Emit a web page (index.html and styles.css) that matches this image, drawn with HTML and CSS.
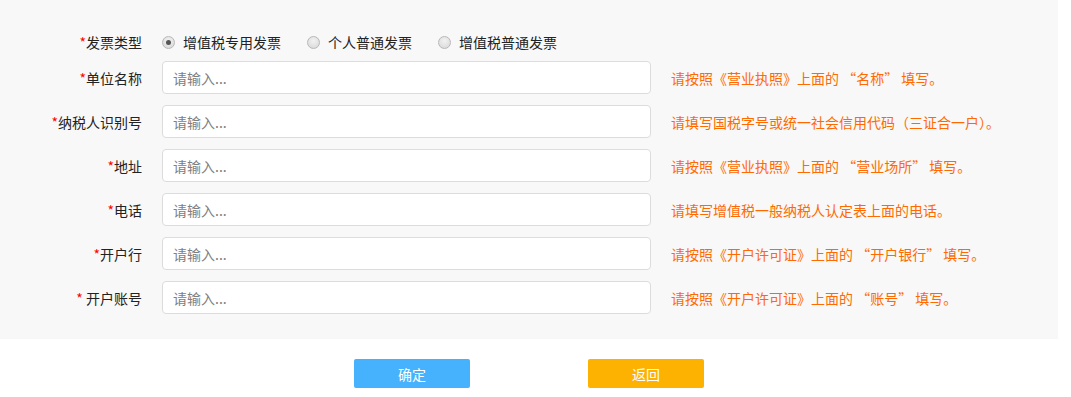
FILE: index.html
```html
<!DOCTYPE html>
<html lang="zh-CN">
<head>
<meta charset="utf-8">
<title>发票信息</title>
<link rel="stylesheet" href="styles.css">
</head>
<body>
<div class="panel">
  <div class="row row-radio">
    <div class="label"><span class="req">*</span>发票类型</div>
    <div class="radios">
      <label class="radio"><span class="dot checked"></span>增值税专用发票</label>
      <label class="radio"><span class="dot"></span>个人普通发票</label>
      <label class="radio"><span class="dot"></span>增值税普通发票</label>
    </div>
  </div>
  <div class="row">
    <div class="label"><span class="req">*</span>单位名称</div>
    <input class="field" type="text" placeholder="请输入...">
    <div class="hint">请按照《营业执照》上面的 “名称” 填写。</div>
  </div>
  <div class="row">
    <div class="label"><span class="req">*</span>纳税人识别号</div>
    <input class="field" type="text" placeholder="请输入...">
    <div class="hint">请填写国税字号或统一社会信用代码（三证合一户）。</div>
  </div>
  <div class="row">
    <div class="label"><span class="req">*</span>地址</div>
    <input class="field" type="text" placeholder="请输入...">
    <div class="hint">请按照《营业执照》上面的 “营业场所” 填写。</div>
  </div>
  <div class="row">
    <div class="label"><span class="req">*</span>电话</div>
    <input class="field" type="text" placeholder="请输入...">
    <div class="hint">请填写增值税一般纳税人认定表上面的电话。</div>
  </div>
  <div class="row">
    <div class="label"><span class="req">*</span>开户行</div>
    <input class="field" type="text" placeholder="请输入...">
    <div class="hint">请按照《开户许可证》上面的 “开户银行” 填写。</div>
  </div>
  <div class="row">
    <div class="label"><span class="req">*</span>&nbsp;开户账号</div>
    <input class="field" type="text" placeholder="请输入...">
    <div class="hint">请按照《开户许可证》上面的 “账号” 填写。</div>
  </div>
</div>
<div class="actions">
  <button class="btn btn-ok" type="button">确定</button>
  <button class="btn btn-back" type="button">返回</button>
</div>
</body>
</html>
```
FILE: styles.css
```css
html, body {
  margin: 0;
  padding: 0;
  background: #ffffff;
}
body {
  font-family: "Microsoft YaHei", "Noto Sans CJK SC", "Noto Sans", sans-serif;
  font-size: 14px;
  color: #222;
}
.panel {
  width: 1058px;
  background: #f8f8f8;
  padding: 31px 0 25px;
  box-sizing: border-box;
  display: flex;
  flex-direction: column;
  gap: 11px;
}
.row {
  display: flex;
  align-items: center;
  height: 33px;
}
.row-radio {
  height: 22px;
  margin-bottom: -3px;
}
.label {
  width: 142px;
  text-align: right;
  margin-right: 20px;
  white-space: nowrap;
  line-height: 20px;
}
.req {
  color: #ff0000;
}
.radios {
  display: flex;
  align-items: center;
}
.radio {
  display: flex;
  align-items: center;
  margin-right: 26px;
  line-height: 20px;
}
.dot {
  width: 11px;
  height: 11px;
  border-radius: 50%;
  border: 1px solid #b8b8b8;
  background: radial-gradient(circle at 50% 35%, #f2f2f2 0%, #d6d6d6 100%);
  margin-right: 8px;
  position: relative;
}
.dot.checked::after {
  content: "";
  position: absolute;
  left: 3px;
  top: 3px;
  width: 5px;
  height: 5px;
  border-radius: 50%;
  background: #555;
}
.field {
  width: 489px;
  height: 33px;
  box-sizing: border-box;
  border: 1px solid #dcdcdc;
  border-radius: 4px;
  background: #fff;
  padding: 0 10px;
  font-family: inherit;
  font-size: 14px;
  color: #333;
  outline: none;
  margin: 0;
}
.field::placeholder {
  color: #808080;
}
.hint {
  margin-left: 20px;
  color: #ff6a00;
  white-space: nowrap;
  line-height: 20px;
}
.actions {
  width: 1058px;
  display: flex;
  justify-content: center;
  gap: 118px;
  padding-top: 20px;
}
.btn {
  width: 116px;
  height: 29px;
  border: none;
  border-radius: 2px;
  color: #fff;
  font-family: inherit;
  font-size: 14px;
  padding: 0;
  cursor: pointer;
}
.btn-ok {
  background: #46b2fd;
}
.btn-back {
  background: #fdb201;
}
```
